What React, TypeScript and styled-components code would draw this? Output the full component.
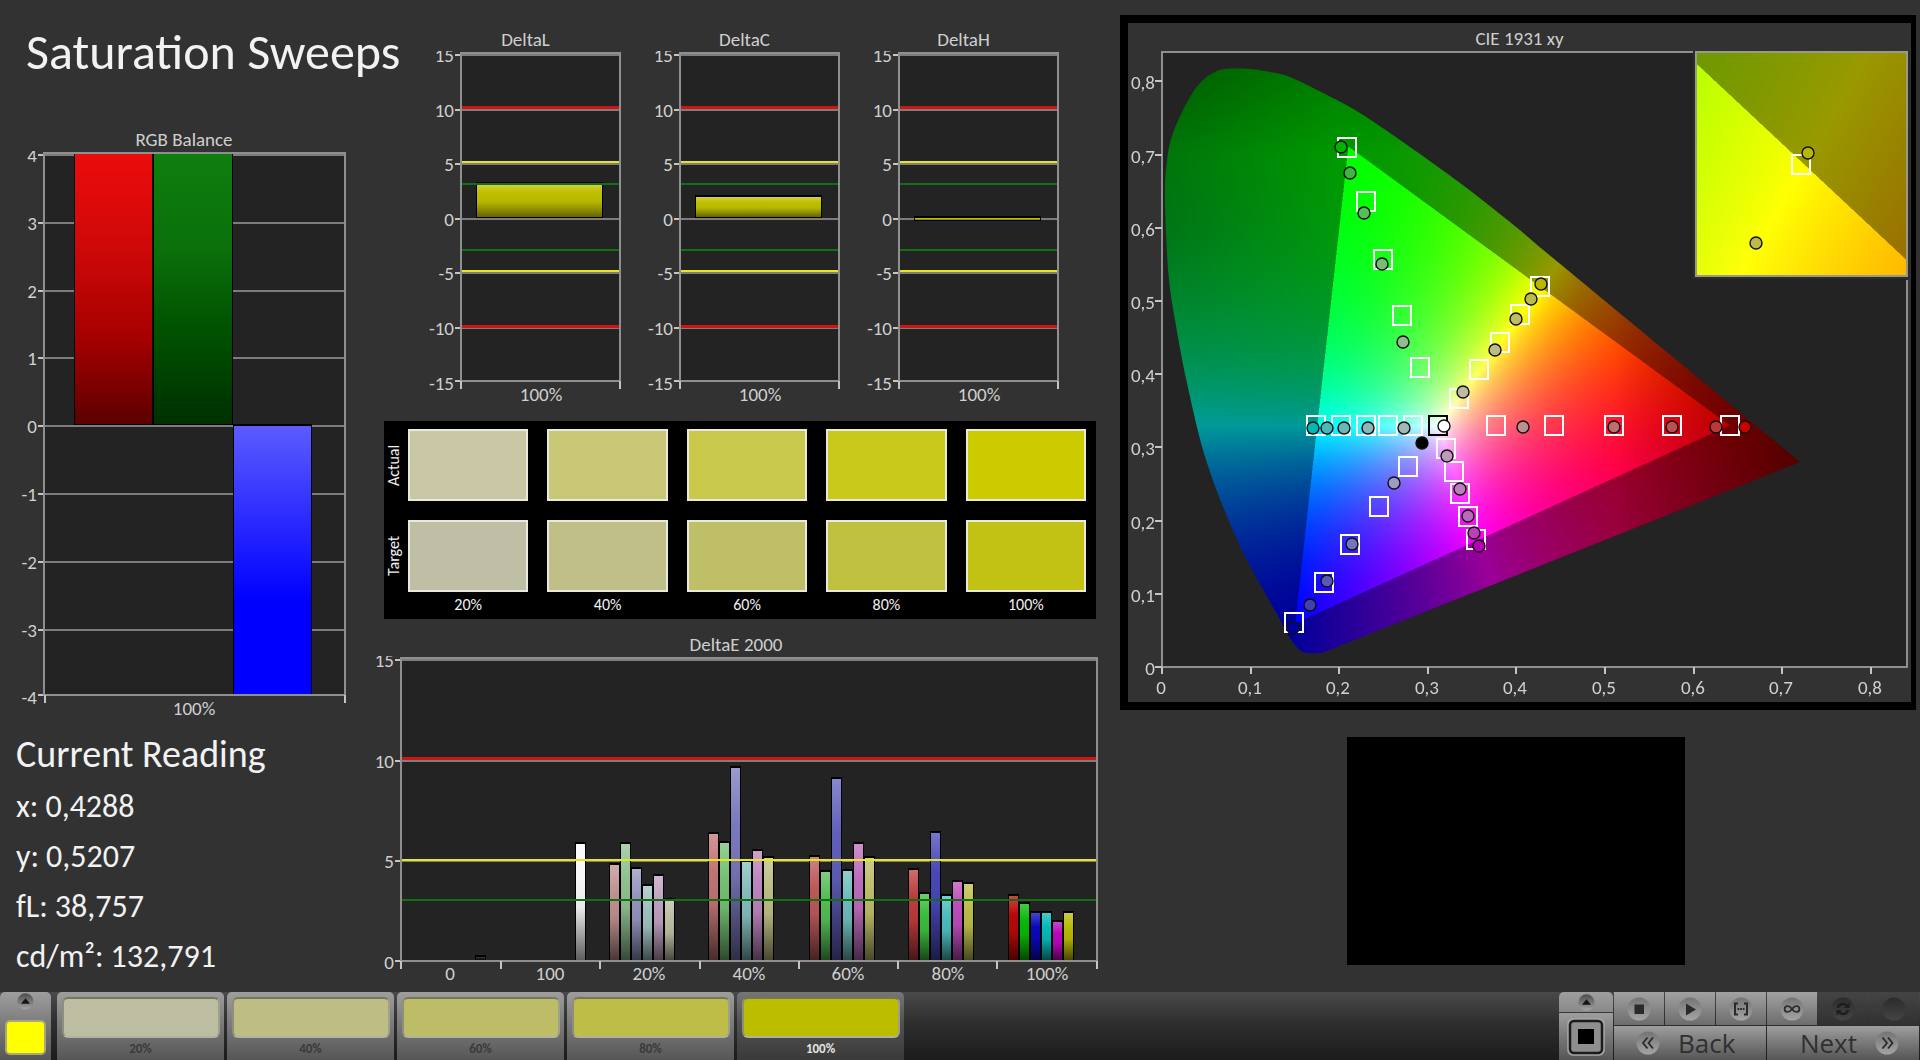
import React, { useLayoutEffect, useRef } from "react";
import styled, { createGlobalStyle, css } from "styled-components";

/* ---------- theme ---------- */

const color = {
  page: "#323232",
  plot: "#232323",
  frame: "#8f8f8f",
  grid: "#7d7d7d",
  tick: "#c4c4c4",
  label: "#cfcfcf",
  text: "#f2f2f2",
  red: "#cf1414",
  yellow: "#e6e619",
  green: "#117011",
};

const uiFont = `Calibri, Carlito, Lato, sans-serif`;

const GlobalStyle = createGlobalStyle`
  * { box-sizing: border-box; }
  body { margin: 0; background: ${color.page}; color: ${color.text}; font-family: ${uiFont}; }
  h1, h2, dl, dd, dt, figure { margin: 0; font-weight: 400; }
  button { font-family: inherit; cursor: pointer; }
`;

/* ---------- layout ---------- */

const Page = styled.div`
  display: flex;
  flex-direction: column;
  min-height: 100vh;
`;

const Main = styled.main`
  flex: 1;
  display: grid;
  grid-template-columns: minmax(0, 372fr) minmax(0, 736fr) minmax(0, 812fr);
  align-items: start;
`;

const BalanceColumn = styled.section`
  padding: 21px 4px 0 0;
`;

const MiddleColumn = styled.section`
  padding-top: 29px;
`;

const CieColumn = styled.section`
  padding: 15px 4px 0 12px;
  display: flex;
  flex-direction: column;
  align-items: center;
  gap: 27px;
`;

const PageTitle = styled.h1`
  margin: 0 0 47px 26px;
  font-size: 50px;
  line-height: 61px;
  white-space: nowrap;
`;

const Figure = styled.figure`
  min-width: 0;
`;

const Caption = styled.figcaption`
  font-size: 19px;
  line-height: 22px;
  text-align: center;
  color: ${color.label};
`;

const ChartSvg = styled.svg`
  display: block;
  width: 100%;
  height: auto;
`;

const AxisText = styled.text`
  font-family: ${uiFont};
  font-size: 19px;
  fill: ${color.label};
`;

const DeltaRow = styled.div`
  display: grid;
  grid-template-columns: repeat(3, minmax(0, 1fr));
  padding: 0 35px 0 44px;
`;

const DeltaEWrap = styled.div`
  margin: 15px 8px 0 0;
`;

/* ---------- reading ---------- */

const Reading = styled.div`
  padding: 10px 0 0 16px;
`;

const ReadingTitle = styled.h2`
  font-size: 38px;
  line-height: 44px;
  margin-bottom: 6px;
`;

const ReadingRow = styled.div`
  display: flex;
  gap: 7px;
  font-size: 32px;
  line-height: 50px;
`;

/* ---------- colour comparison ---------- */

const Compare = styled.div`
  display: flex;
  flex-direction: column;
  gap: 19px;
  margin: 16px 12px 0;
  padding: 8px 10px 0 0;
  height: 198px;
  background: #000;
`;

const CompareRow = styled.div`
  display: grid;
  grid-template-columns: 24px minmax(0, 1fr);
`;

const CompareCells = styled.div`
  display: grid;
  grid-template-columns: repeat(5, minmax(0, 1fr));
  column-gap: 19px;
`;

const CompareSide = styled.div`
  display: flex;
  align-items: center;
  justify-content: center;
  writing-mode: vertical-rl;
  rotate: 180deg;
  width: 20px;
  font-size: 16px;
  line-height: 20px;
`;

const CompareSwatch = styled.div<{ $fill: string }>`
  height: 72px;
  background: ${(p) => p.$fill};
  border: 2px solid #e9e9dc;
`;

const CompareLabel = styled.div`
  margin-top: -16px;
  font-size: 16px;
  line-height: 20px;
  text-align: center;
`;

/* ---------- CIE ---------- */

const CiePanel = styled.figure`
  width: 100%;
  padding-top: 5px;
  border: solid #000;
  border-width: 8px 5px 8px 8px;
`;

const CieStack = styled.div`
  display: grid;
  > * { grid-area: 1 / 1; }
`;

const CieCanvas = styled.canvas`
  display: block;
  width: 100%;
  height: auto;
`;

const Preview = styled.div`
  width: min(338px, 60%);
  aspect-ratio: 338 / 228;
  margin-right: 5px;
  background: #000;
`;

/* ---------- toolbar ---------- */

const Toolbar = styled.footer`
  display: flex;
  height: 68px;
  background: linear-gradient(#4a4a4a, #2e2e2e 45%, #1c1c1c);
`;

const metal = css`
  background: linear-gradient(#9e9e9e, #7c7c7c 45%, #565656);
  border: 0;
  padding: 0;
`;

const ColorPicker = styled.button`
  ${metal}
  display: flex;
  flex-direction: column;
  align-items: center;
  justify-content: space-between;
  width: 51px;
  padding: 1px 0 5px;
  border-radius: 5px 5px 0 0;
`;

const PickedColor = styled.span`
  width: 41px;
  height: 35px;
  border: 2px solid #a8a87c;
  border-radius: 5px;
  background: #ffff00;
`;

const SweepList = styled.div`
  display: flex;
  gap: 3px;
  margin-left: 6px;
`;

const Sweep = styled.button<{ $active?: boolean }>`
  ${metal}
  ${(p) => p.$active && "background: linear-gradient(#767676, #525252 45%, #3a3a3a);"}
  display: flex;
  flex-direction: column;
  align-items: center;
  width: 167px;
  padding: 5px 0 0;
  border-radius: 5px 5px 0 0;
  font-size: 13px;
  line-height: 22px;
  font-weight: 700;
  color: ${(p) => (p.$active ? "#e4e4e4" : "#3a3a3a")};
`;

const SweepSwatch = styled.span<{ $fill: string }>`
  width: 158px;
  height: 42px;
  border: 2px solid;
  border-color: #76765c #a0a08c #b2b2a4 #8e8e7c;
  border-radius: 6px;
  background: ${(p) => p.$fill};
`;

const Spacer = styled.div`
  flex: 1;
`;

const WindowControls = styled.div`
  display: flex;
  flex-direction: column;
  gap: 1px;
  width: 54px;
  margin-right: 1px;
`;

const WindowButton = styled.button<{ $tall?: boolean }>`
  ${metal}
  display: flex;
  align-items: center;
  justify-content: center;
  height: ${(p) => (p.$tall ? 47 : 20)}px;
  border-radius: ${(p) => (p.$tall ? "0" : "5px 5px 0 0")};
  ${(p) => !p.$tall && "background: linear-gradient(#9e9e9e, #8a8a8a);"}
`;

const Transport = styled.div`
  display: grid;
  grid-template-columns: repeat(6, 50px);
  grid-template-rows: 33px 34px;
  gap: 1px;
  margin-right: 1px;
`;

const TransportButton = styled.button<{ $off?: boolean }>`
  ${metal}
  display: flex;
  align-items: center;
  justify-content: center;
  background: ${(p) => (p.$off ? "linear-gradient(#444, #313131)" : "linear-gradient(#a2a2a2, #6c6c6c)")};
`;

const NavButton = styled.button<{ $side: "start" | "end" }>`
  ${metal}
  grid-column: span 3;
  display: flex;
  align-items: center;
  justify-content: flex-${(p) => p.$side};
  gap: 18px;
  padding: 0 20px 0 22px;
  font-family: "Open Sans", "Noto Sans", sans-serif;
  font-size: 26px;
  line-height: 32px;
  color: #303030;
`;

/* ---------- helpers ---------- */

function mix(hex: string, other: string, t: number) {
  const a = parseInt(hex.slice(1), 16);
  const b = parseInt(other.slice(1), 16);
  const ch = (s: number) => Math.round(((a >> s) & 255) * (1 - t) + ((b >> s) & 255) * t);
  return `rgb(${ch(16)},${ch(8)},${ch(0)})`;
}

/* ---------- bar charts ---------- */

type Bar = { x: number; w: number; y: number; h: number; stops: [number, string][] };

type Limit = { y: number; stroke: string; w?: number };

type PlotProps = {
  name: string;
  viewBox: string;
  left: number;
  right: number;
  top: number;
  bottom: number;
  firstTick: number;
  step: number;
  yLabels: string[];
  xTicks: number[];
  xLabels: [number, string][];
  xLabelY: number;
  bars: Bar[];
  limits?: Limit[];
};

function Plot(p: PlotProps) {
  const last = p.yLabels.length - 1;
  return (
    <ChartSvg viewBox={p.viewBox} role="img" aria-label={p.name}>
      <defs>
        {p.bars.map((b, i) => (
          <linearGradient key={i} id={`${p.name}-${i}`} x1="0" y1="0" x2="0" y2="1">
            {b.stops.map(([o, c]) => (
              <stop key={o} offset={o} stopColor={c} />
            ))}
          </linearGradient>
        ))}
      </defs>
      <rect x={p.left} y={p.top} width={p.right - p.left} height={p.bottom - p.top} fill={color.plot} />
      {p.yLabels.map((label, i) => {
        const y = p.firstTick + p.step * i;
        const lineY = i === last ? p.bottom : Math.round(y);
        return (
          <g key={label}>
            <rect x={p.left} y={lineY - 1} width={p.right - p.left} height={2} fill={color.grid} />
            <rect x={p.left - 6} y={lineY - 1} width={6} height={2} fill={color.tick} />
            <AxisText x={p.left - 7} y={Math.round(y) + 7} textAnchor="end">
              {label}
            </AxisText>
          </g>
        );
      })}
      {p.bars.map((b, i) => (
        <g key={i}>
          <rect x={b.x} y={b.y} width={b.w} height={b.h} fill="#000" />
          <rect x={b.x + 1} y={b.y + 2} width={b.w - 2} height={Math.max(1, b.h - 3)} fill={`url(#${p.name}-${i})`} />
        </g>
      ))}
      {p.limits?.map((l) => (
        <rect key={l.y} x={p.left} y={l.y - 1} width={p.right - p.left} height={l.w ?? 2} fill={l.stroke} />
      ))}
      <rect x={p.left} y={p.top} width={p.right - p.left} height={p.bottom - p.top} fill="none" stroke={color.frame} strokeWidth={2} />
      {p.xTicks.map((x) => (
        <rect key={x} x={x - 1} y={p.bottom} width={2} height={8} fill={color.tick} />
      ))}
      {p.xLabels.map(([x, label]) => (
        <AxisText key={label} x={x} y={p.xLabelY} textAnchor="middle">
          {label}
        </AxisText>
      ))}
    </ChartSvg>
  );
}

const balanceBars: Bar[] = [
  { x: 74, w: 79, y: 152, h: 273, stops: [[0, "#ec0c0c"], [0.35, "#cf0808"], [0.68, "#a60000"], [1, "#5c0000"]] },
  { x: 153, w: 80, y: 152, h: 273, stops: [[0, "#0e7e0e"], [0.35, "#0b700b"], [0.65, "#005200"], [1, "#003000"]] },
  { x: 233, w: 79, y: 424, h: 272, stops: [[0, "#5c5cff"], [0.35, "#2a2aff"], [0.65, "#0000ff"], [1, "#0000ff"]] },
];

const deltaStops: [number, string][] = [
  [0, "#d0d040"],
  [0.25, "#c0c000"],
  [0.55, "#b6b600"],
  [1, "#646400"],
];

const deltaCharts = [
  { name: "DeltaL", y: 182, h: 36 },
  { name: "DeltaC", y: 195, h: 23 },
  { name: "DeltaH", y: 216, h: 5 },
];

const deltaLimits: Limit[] = [
  { y: 107, stroke: color.red, w: 3 },
  { y: 162, stroke: color.yellow },
  { y: 184, stroke: color.green },
  { y: 250, stroke: color.green },
  { y: 271, stroke: color.yellow },
  { y: 326, stroke: color.red, w: 3 },
];

const deltaEGroups: { x: number; bars: [number, string][] }[] = [
  { x: 475, bars: [[955, "#1c1c1c"]] },
  { x: 575, bars: [[842, "#f8f8f8"]] },
  { x: 609, bars: [[863, "#c09090"], [842, "#90c090"], [867, "#9494c0"], [884, "#a0c0c0"], [874, "#c0a0c0"], [898, "#bcbca4"]] },
  { x: 708, bars: [[832, "#c07474"], [841, "#74c074"], [766, "#7878bc"], [860, "#84bcbc"], [849, "#bc84bc"], [856, "#bcbc84"]] },
  { x: 809, bars: [[855, "#bc5858"], [870, "#54bc54"], [777, "#6060bc"], [869, "#6cbcbc"], [842, "#bc6cbc"], [856, "#bcbc68"]] },
  { x: 908, bars: [[868, "#bc3c3c"], [892, "#3cbc3c"], [831, "#4848b8"], [894, "#4cbcbc"], [880, "#bc4cbc"], [882, "#bcbc4c"]] },
  { x: 1008, bars: [[894, "#b80808"], [902, "#08b808"], [911, "#0808b8"], [911, "#08b8b8"], [920, "#b808b8"], [911, "#b8b808"]] },
];

const deltaEBars: Bar[] = deltaEGroups.flatMap((g) =>
  g.bars.map(([y, c], i) => ({
    x: g.x + i * 11,
    w: 11,
    y,
    h: 961 - y,
    stops: [
      [0, mix(c, "#ffffff", 0.25)],
      [0.3, c],
      [0.55, mix(c, "#000000", 0.06)],
      [1, mix(c, "#000000", 0.62)],
    ] as [number, string][],
  }))
);

/* ---------- CIE diagram ---------- */

const cie = { x: 1128, y: 50, w: 783, h: 652, left: 1162, right: 1907, top: 52, bottom: 667, ux: 886.7, uy: 733 };
const inset = { x: 1696, y: 53, w: 211, h: 223, cx: 0.4265, cy: 0.5183, ux: 4200, uy: 4440 };

/* Spectral locus, from the blue end round the green to the red corner. */
const locus = [
  [1322, 653], [1308, 653], [1300, 650], [1290, 638], [1277, 614], [1240, 546], [1207, 463], [1187, 383],
  [1175, 320], [1169, 280], [1166, 233], [1165, 187], [1168, 153], [1173, 133], [1182, 112], [1193, 92],
  [1203, 80], [1213, 73], [1225, 69], [1250, 69], [1270, 72], [1290, 77], [1323, 93], [1360, 113],
  [1410, 147], [1460, 183], [1510, 222], [1553, 258], [1673, 357], [1800, 462],
];

const clamp = (v: number) => Math.min(1, Math.max(0, v));

function xyToRgb(x: number, y: number): [number, number, number] {
  const Y = 1;
  const X = x / Math.max(y, 0.001);
  const Z = (1 - x - y) / Math.max(y, 0.001);
  const lin = [
    2.041369 * X - 0.5649464 * Y - 0.3446944 * Z,
    -0.969266 * X + 1.8760108 * Y + 0.041556 * Z,
    0.0134474 * X - 0.1183897 * Y + 1.0154096 * Z,
  ];
  const peak = Math.max(...lin);
  const outside = Math.min(...lin) < -0.0005;
  const red = 1 - clamp((x - 0.51) * 2.2);
  const green = 1 - clamp((y - 0.7) * 1.5) - clamp((0.2 - x) * 1.2) * clamp((y - 0.35) * 4);
  const k = 255 * red * green * (outside ? 0.6 : 1);
  const [r, g, b] = lin.map((v) => clamp(v / peak));
  /* purples run softer than the other hues */
  const rExp = 1.35 - 0.5 * clamp(b - g);
  const bExp = 1.35 - 0.5 * clamp(r - g);
  return [k * Math.pow(r, rExp), k * Math.pow(g, 1.35), k * Math.pow(b, bExp)];
}

function field(w: number, h: number, toXy: (px: number, py: number) => [number, number]) {
  const c = document.createElement("canvas");
  c.width = w * 2;
  c.height = h * 2;
  const g = c.getContext("2d")!;
  const img = g.createImageData(c.width, c.height);
  for (let j = 0; j < c.height; j++) {
    for (let i = 0; i < c.width; i++) {
      const [x, y] = toXy(i / 2, j / 2);
      const rgb = xyToRgb(x, y);
      const o = (j * c.width + i) * 4;
      img.data[o] = rgb[0];
      img.data[o + 1] = rgb[1];
      img.data[o + 2] = rgb[2];
      img.data[o + 3] = 255;
    }
  }
  g.putImageData(img, 0, 0);
  return c;
}

function paintCie(canvas: HTMLCanvasElement) {
  const g = canvas.getContext("2d")!;
  g.setTransform(1, 0, 0, 1, -cie.x, -cie.y);
  g.fillStyle = color.plot;
  g.fillRect(cie.left, cie.top, cie.right - cie.left, cie.bottom - cie.top);

  g.save();
  g.beginPath();
  g.moveTo(locus[0][0], locus[0][1]);
  for (let i = 0; i < locus.length - 1; i++) {
    const p0 = locus[Math.max(0, i - 1)];
    const p1 = locus[i];
    const p2 = locus[i + 1];
    const p3 = locus[Math.min(locus.length - 1, i + 2)];
    g.bezierCurveTo(
      p1[0] + (p2[0] - p0[0]) / 6, p1[1] + (p2[1] - p0[1]) / 6,
      p2[0] - (p3[0] - p1[0]) / 6, p2[1] - (p3[1] - p1[1]) / 6,
      p2[0], p2[1]
    );
  }
  g.closePath();
  g.clip();
  const w = cie.right - cie.left;
  const h = cie.bottom - cie.top;
  g.drawImage(field(w, h, (px, py) => [px / cie.ux, (h - py) / cie.uy]), cie.left, cie.top, w, h);
  g.restore();

  g.fillStyle = "#2c2c2c";
  g.fillRect(inset.x - 3, inset.y - 2, inset.w + 6, inset.h + 5);
  g.drawImage(
    field(inset.w, inset.h, (px, py) => [
      inset.cx + (px - inset.w / 2) / inset.ux,
      inset.cy - (py - inset.h / 2) / inset.uy,
    ]),
    inset.x, inset.y, inset.w, inset.h
  );
}

const targets = [
  [1347, 147], [1366, 201], [1383, 259], [1402, 315], [1420, 367],
  [1540, 286], [1520, 314], [1500, 342], [1479, 369], [1459, 398],
  [1316, 425], [1341, 425], [1366, 425], [1388, 425], [1413, 425],
  [1496, 425], [1554, 425], [1614, 425], [1672, 425], [1730, 425],
  [1446, 448], [1454, 471], [1460, 493], [1468, 516], [1476, 539],
  [1408, 466], [1379, 506], [1350, 544], [1324, 582], [1294, 622],
  [1801, 164],
];

const readings: [number, number, string][] = [
  [1341, 147, "#00b400"], [1350, 173, "#3cb83c"], [1364, 213, "#5abc5a"], [1382, 264, "#76bc76"], [1403, 342, "#94bc94"],
  [1541, 284, "#b8b800"], [1531, 299, "#bcbc48"], [1516, 319, "#bcbc6a"], [1495, 350, "#bcbc88"], [1463, 392, "#bcbca4"],
  [1313, 428, "#00b8b4"], [1327, 428, "#48b8b8"], [1344, 428, "#68b8b8"], [1368, 428, "#88b8b8"], [1404, 428, "#a0b8b8"],
  [1523, 427, "#bc9090"], [1614, 427, "#bc7070"], [1672, 427, "#bc5050"], [1716, 427, "#bc3838"], [1745, 427, "#c80000"],
  [1447, 456, "#bc9cb8"], [1460, 489, "#bc80b8"], [1468, 516, "#bc68bc"], [1474, 533, "#bc40bc"], [1479, 546, "#b800b8"],
  [1394, 483, "#9c9cc4"], [1352, 544, "#7474bc"], [1327, 581, "#5858b8"], [1310, 605, "#4040b0"], [1293, 628, "#00009c"],
  [1422, 443, "#000000"],
  [1808, 153, "#b8b800"], [1756, 243, "#bcbc48"],
];

function CieDiagram() {
  const ref = useRef<HTMLCanvasElement>(null);
  useLayoutEffect(() => {
    if (ref.current) paintCie(ref.current);
  }, []);
  const axis = ["0", "0,1", "0,2", "0,3", "0,4", "0,5", "0,6", "0,7", "0,8"];
  return (
    <CieStack>
      <CieCanvas ref={ref} width={cie.w} height={cie.h} />
      <ChartSvg viewBox={`${cie.x} ${cie.y} ${cie.w} ${cie.h}`} role="img" aria-label="CIE 1931 xy chromaticity">
        <path d={`M1693 52H${cie.left}V${cie.bottom}H${cie.right}V280`} fill="none" stroke={color.frame} strokeWidth={2} />
        {axis.map((label, i) => {
          const x = Math.round(cie.left + i * 88.6);
          const y = Math.round(cie.bottom - i * 73.2);
          return (
            <g key={label}>
              <rect x={x - 1} y={cie.bottom} width={2} height={7} fill={color.tick} />
              <AxisText x={x - 1} y={694} textAnchor="middle">{label}</AxisText>
              <rect x={cie.left - 7} y={y - 1} width={7} height={2} fill={color.tick} />
              <AxisText x={cie.left - 7} y={y + 8} textAnchor="end">{label}</AxisText>
            </g>
          );
        })}
        <rect x={1696} y={52} width={211} height={224} fill="none" stroke="#999988" strokeWidth={2} />
        {targets.map(([x, y]) => (
          <rect key={`${x}-${y}`} x={x - 9} y={y - 9} width={18} height={19} fill="none" stroke="#ffffff" strokeWidth={2} />
        ))}
        <rect x={1429} y={416} width={18} height={19} fill="none" stroke="#000000" strokeWidth={2} />
        {readings.map(([x, y, c]) => (
          <circle key={`${x}-${y}`} cx={x} cy={y} r={6} fill={c} stroke="#101010" strokeWidth={1.4} />
        ))}
        <circle cx={1444} cy={426} r={6} fill="#ffffff" stroke="#101010" strokeWidth={1.4} />
      </ChartSvg>
    </CieStack>
  );
}

/* ---------- toolbar icons ---------- */

type Glyph = "up" | "stop" | "play" | "range" | "loop" | "sync" | "none" | "back" | "next";

function RoundIcon({ glyph, size = 24, off = false }: { glyph: Glyph; size?: number; off?: boolean }) {
  const ink = off ? "#1e1e1e" : "#2a2a2a";
  const id = `round-${glyph}-${off ? "off" : "on"}`;
  return (
    <svg width={size} height={size} viewBox="0 0 24 24" aria-hidden="true">
      <defs>
        <linearGradient id={id} x1="0" y1="0" x2="0" y2="1">
          <stop offset="0" stopColor={off ? "#2c2c2c" : glyph === "up" ? "#4c4c4c" : "#747474"} />
          <stop offset="1" stopColor={off ? "#444444" : "#a4a4a4"} />
        </linearGradient>
      </defs>
      <circle cx="12" cy="12" r="11.5" fill={`url(#${id})`} />
      {glyph === "up" && <path d="M12 7.5 18.5 15h-13z" fill="#161616" />}
      {glyph === "stop" && <rect x="7.5" y="7.5" width="9.5" height="9.5" fill={ink} />}
      {glyph === "play" && <path d="M8 6.5 18 12.5 8 18.5z" fill={ink} />}
      {glyph === "range" && (
        <g fill="none" stroke={ink} strokeWidth="2">
          <path d="M9 6.5H6v11h3M15 6.5h3v11h-3" />
          <path d="M8.5 12h7" strokeDasharray="1.8 0.9" />
        </g>
      )}
      {glyph === "loop" && (
        <path
          d="M12 12C10.4 9.8 9.2 9 7.6 9a3 3 0 0 0 0 6c1.6 0 2.8-.8 4.4-3s2.8-3 4.4-3a3 3 0 0 1 0 6c-1.6 0-2.8-.8-4.4-3z"
          fill="none" stroke={ink} strokeWidth="1.7"
        />
      )}
      {glyph === "sync" && (
        <g fill="none" stroke={ink} strokeWidth="2.4">
          <path d="M7 11c.5-3 3-4 5-4 1.5 0 2.8.6 3.8 1.6" />
          <path d="M17 13c-.5 3-3 4-5 4-1.5 0-2.8-.6-3.8-1.6" />
          <path d="M18.5 5.5V11H13zM5.500 18.5V13H11z" fill={ink} stroke="none" />
        </g>
      )}
      {glyph === "back" && <path d="M11.5 6.5 7 12l4.5 5.5M17 6.5 12.5 12l4.5 5.5" fill="none" stroke={ink} strokeWidth="1.8" />}
      {glyph === "next" && <path d="M7.5 6.5 12 12l-4.5 5.5M13 6.5 17.5 12 13 17.5" fill="none" stroke={ink} strokeWidth="1.8" />}
    </svg>
  );
}

function WindowIcon() {
  return (
    <svg width="38" height="38" viewBox="0 0 38 38" aria-hidden="true">
      <rect x="1" y="1" width="36" height="36" rx="5" fill="#8a8a8a" stroke="#a8a8a8" strokeWidth="1.5" />
      <rect x="3" y="3" width="32" height="32" rx="4" fill="#8e8e8e" stroke="#1c1c1c" strokeWidth="2.5" />
      <rect x="11" y="11" width="16" height="15" fill="#000000" />
    </svg>
  );
}

/* ---------- data ---------- */

const actual = ["#cac8a4", "#c8c876", "#c8c84a", "#c9c91a", "#cbcb00"];
const target = ["#bfbfa5", "#bfbf87", "#bfbf68", "#bfbf40", "#c2c214"];
const levels = ["20%", "40%", "60%", "80%", "100%"];
const sweepFills = ["#bdbda2", "#bdbd84", "#bdbd68", "#bdbd48", "#bdbd00"];

const current = [
  ["x:", "0,4288"],
  ["y:", "0,5207"],
  ["fL:", "38,757"],
  ["cd/m²:", "132,791"],
];

/* ---------- app ---------- */

export default function App() {
  return (
    <Page>
      <GlobalStyle />
      <Main>
        <BalanceColumn>
          <PageTitle>Saturation Sweeps</PageTitle>
          <Figure>
            <Caption>RGB Balance</Caption>
            <Plot
              name="balance"
              viewBox="0 151 368 571"
              left={44} right={345} top={153} bottom={695}
              firstTick={155} step={67.8}
              yLabels={["4", "3", "2", "1", "0", "-1", "-2", "-3", "-4"]}
              xTicks={[45, 345]}
              xLabels={[[194, "100%"]]}
              xLabelY={715}
              bars={balanceBars}
            />
          </Figure>
          <Reading>
            <ReadingTitle>Current Reading</ReadingTitle>
            <dl>
              {current.map(([k, v]) => (
                <ReadingRow key={k}>
                  <dt>{k}</dt>
                  <dd>{v}</dd>
                </ReadingRow>
              ))}
            </dl>
          </Reading>
        </BalanceColumn>

        <MiddleColumn>
          <DeltaRow>
            {deltaCharts.map((d) => (
              <Figure key={d.name}>
                <Caption>{d.name}</Caption>
                <Plot
                  name={d.name}
                  viewBox="0 51 219 354"
                  left={45} right={204} top={53} bottom={381}
                  firstTick={55} step={54.6}
                  yLabels={["15", "10", "5", "0", "-5", "-10", "-15"]}
                  xTicks={[45, 204]}
                  xLabels={[[125, "100%"]]}
                  xLabelY={401}
                  bars={[{ x: 60, w: 127, y: d.y, h: d.h, stops: deltaStops }]}
                  limits={deltaLimits}
                />
              </Figure>
            ))}
          </DeltaRow>

          <Compare>
            <CompareRow>
              <CompareSide>Actual</CompareSide>
              <CompareCells>
                {actual.map((c) => <CompareSwatch key={c} $fill={c} />)}
              </CompareCells>
            </CompareRow>
            <CompareRow>
              <CompareSide>Target</CompareSide>
              <CompareCells>
                {target.map((c) => <CompareSwatch key={c} $fill={c} />)}
              </CompareCells>
            </CompareRow>
            <CompareRow>
              <span />
              <CompareCells>
                {levels.map((l) => <CompareLabel key={l}>{l}</CompareLabel>)}
              </CompareCells>
            </CompareRow>
          </Compare>

          <DeltaEWrap>
            <Figure>
              <Caption>DeltaE 2000</Caption>
              <Plot
                name="deltaE"
                viewBox="372 656 728 325"
                left={401} right={1097} top={658} bottom={961}
                firstTick={660} step={100.7}
                yLabels={["15", "10", "5", "0"]}
                xTicks={[401, 501, 600, 700, 799, 898, 997, 1097]}
                xLabels={[[450, "0"], [550, "100"], [649, "20%"], [749, "40%"], [848, "60%"], [948, "80%"], [1047, "100%"]]}
                xLabelY={980}
                bars={deltaEBars}
                limits={[
                  { y: 758, stroke: color.red, w: 3 },
                  { y: 860, stroke: color.yellow },
                  { y: 900, stroke: color.green },
                ]}
              />
            </Figure>
          </DeltaEWrap>
        </MiddleColumn>

        <CieColumn>
          <CiePanel>
            <Caption>CIE 1931 xy</Caption>
            <CieDiagram />
          </CiePanel>
          <Preview />
        </CieColumn>
      </Main>

      <Toolbar>
        <ColorPicker aria-label="Pick colour">
          <RoundIcon glyph="up" size={17} />
          <PickedColor />
        </ColorPicker>
        <SweepList>
          {levels.map((l, i) => (
            <Sweep key={l} $active={i === 4}>
              <SweepSwatch $fill={sweepFills[i]} />
              {l}
            </Sweep>
          ))}
        </SweepList>
        <Spacer />
        <WindowControls>
          <WindowButton aria-label="Expand">
            <RoundIcon glyph="up" size={17} />
          </WindowButton>
          <WindowButton $tall aria-label="Pattern window">
            <WindowIcon />
          </WindowButton>
        </WindowControls>
        <Transport>
          <TransportButton aria-label="Stop"><RoundIcon glyph="stop" /></TransportButton>
          <TransportButton aria-label="Play"><RoundIcon glyph="play" /></TransportButton>
          <TransportButton aria-label="Read range"><RoundIcon glyph="range" /></TransportButton>
          <TransportButton aria-label="Continuous"><RoundIcon glyph="loop" /></TransportButton>
          <TransportButton $off aria-label="Refresh"><RoundIcon glyph="sync" off /></TransportButton>
          <TransportButton $off aria-label="Record"><RoundIcon glyph="none" off /></TransportButton>
          <NavButton $side="start">
            <RoundIcon glyph="back" />
            Back
          </NavButton>
          <NavButton $side="end">
            Next
            <RoundIcon glyph="next" />
          </NavButton>
        </Transport>
      </Toolbar>
    </Page>
  );
}
